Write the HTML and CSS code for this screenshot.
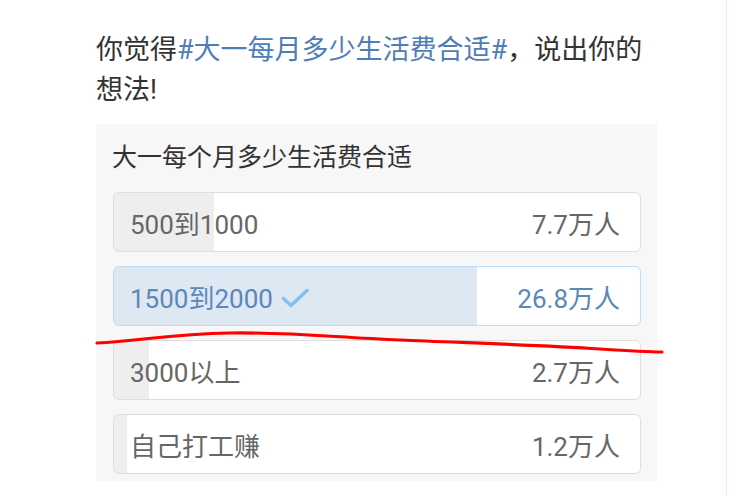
FILE: index.html
```html
<!DOCTYPE html>
<html lang="zh-CN">
<head>
<meta charset="UTF-8">
<title>大一每个月多少生活费合适</title>
<link rel="stylesheet" href="styles.css">
</head>
<body>
<div class="page">
  <div class="post">
    <p class="post-text">你觉得<a class="topic">#大一每月多少生活费合适#</a>，说出你的想法!</p>
    <div class="poll">
      <div class="poll-title">大一每个月多少生活费合适</div>
      <div class="option" style="--p:19%"><span>500到1000</span><span>7.7万人</span></div>
      <div class="option chosen" style="--p:69%"><span>1500到2000 <svg class="check" viewBox="0 0 28 20" width="28" height="20"><path d="M2.5 10.5 L10 17.5 L26 2.5" fill="none" stroke="#82c0f4" stroke-width="3.5" stroke-linecap="round" stroke-linejoin="round"/></svg></span><span>26.8万人</span></div>
      <div class="option" style="--p:6.7%"><span>3000以上</span><span>2.7万人</span></div>
      <div class="option" style="--p:2.5%"><span>自己打工赚</span><span>1.2万人</span></div>
    </div>
  </div>
  <svg class="scribble" viewBox="0 0 734 496" width="734" height="496"><path d="M97 343 C140 341 170 334 230 333 C290 332 330 337 400 340 C470 343 540 345 600 349 C630 351 650 352 662 352" fill="none" stroke="#f00" stroke-width="3.2" stroke-linecap="round"/></svg>
</div>
</body>
</html>
```

FILE: styles.css
```css
body { margin:0; background:#fdfdfd; font-family:Roboto,"Noto Sans CJK SC",sans-serif; }
.page { position:relative; width:726px; height:496px; background:#fff; border-right:1px solid #ececec; overflow:hidden; }
.post { padding:30px 0 0 96px; width:561px; }
.post-text { margin:0; font-size:27px; line-height:40px; color:#333; }
.topic { color:#4f7db5; }
.poll { margin-top:14px; background:#f7f7f7; padding:0 16px 7px 17px; }
.poll-title { height:68px; line-height:68px; font-size:25px; color:#333; margin-left:-1px; }
.option { display:flex; justify-content:space-between; align-items:center; box-sizing:border-box; height:60px; margin-bottom:14px; padding:0 20px 0 16px; border:1px solid #dedede; border-radius:6px; font-size:26px; color:#666; background:linear-gradient(to right,#eeeeee var(--p),#fff var(--p)); }
.option:last-child { margin-bottom:0; }
.option.chosen { color:#5b87b9; border-color:#bfdcf6; background:linear-gradient(to right,#dde8f3 var(--p),#fff var(--p)); }
.check { vertical-align:middle; margin-left:2px; position:relative; top:-3px; }
.scribble { position:absolute; left:0; top:0; pointer-events:none; }
```
